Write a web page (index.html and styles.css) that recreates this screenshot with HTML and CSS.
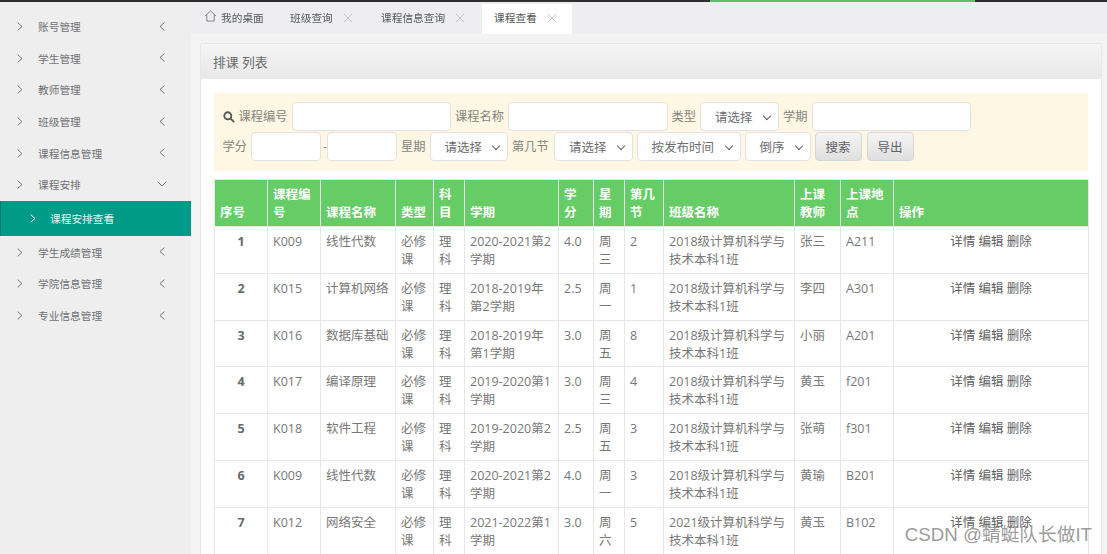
FILE: index.html
```html
<!DOCTYPE html>
<html lang="zh-CN">
<head>
<meta charset="utf-8">
<title>课程查看</title>
<link rel="stylesheet" href="styles.css">
</head>
<body>
<div class="page">
<div class="loadbar"><div class="loadbar-fill"></div></div>
<div class="app">
  <aside class="sidebar">
    <ul class="menu">
      <li class="menu-item"><svg class="chev" viewBox="0 0 6 9"><path d="M.7.7 5 4.500.7 8.300"/></svg><span class="menu-label">账号管理</span><svg class="chev-end" viewBox="0 0 6 9"><path d="M5.500.5 1 4.500l4.500 4"/></svg></li>
      <li class="menu-item"><svg class="chev" viewBox="0 0 6 9"><path d="M.7.7 5 4.500.7 8.300"/></svg><span class="menu-label">学生管理</span><svg class="chev-end" viewBox="0 0 6 9"><path d="M5.500.5 1 4.500l4.500 4"/></svg></li>
      <li class="menu-item"><svg class="chev" viewBox="0 0 6 9"><path d="M.7.7 5 4.500.7 8.300"/></svg><span class="menu-label">教师管理</span><svg class="chev-end" viewBox="0 0 6 9"><path d="M5.500.5 1 4.500l4.500 4"/></svg></li>
      <li class="menu-item"><svg class="chev" viewBox="0 0 6 9"><path d="M.7.7 5 4.500.7 8.300"/></svg><span class="menu-label">班级管理</span><svg class="chev-end" viewBox="0 0 6 9"><path d="M5.500.5 1 4.500l4.500 4"/></svg></li>
      <li class="menu-item"><svg class="chev" viewBox="0 0 6 9"><path d="M.7.7 5 4.500.7 8.300"/></svg><span class="menu-label">课程信息管理</span><svg class="chev-end" viewBox="0 0 6 9"><path d="M5.500.5 1 4.500l4.500 4"/></svg></li>
      <li class="menu-item"><svg class="chev" viewBox="0 0 6 9"><path d="M.7.7 5 4.500.7 8.300"/></svg><span class="menu-label">课程安排</span><svg class="chev-down" viewBox="0 0 10 6"><path d="M.7.7 5 5 9.300.7"/></svg></li>
      <li class="menu-sub"><svg class="chev" viewBox="0 0 6 9"><path d="M.7.7 5 4.500.7 8.300"/></svg><span class="menu-label">课程安排查看</span></li>
      <li class="menu-item"><svg class="chev" viewBox="0 0 6 9"><path d="M.7.7 5 4.500.7 8.300"/></svg><span class="menu-label">学生成绩管理</span><svg class="chev-end" viewBox="0 0 6 9"><path d="M5.500.5 1 4.500l4.500 4"/></svg></li>
      <li class="menu-item"><svg class="chev" viewBox="0 0 6 9"><path d="M.7.7 5 4.500.7 8.300"/></svg><span class="menu-label">学院信息管理</span><svg class="chev-end" viewBox="0 0 6 9"><path d="M5.500.5 1 4.500l4.500 4"/></svg></li>
      <li class="menu-item"><svg class="chev" viewBox="0 0 6 9"><path d="M.7.7 5 4.500.7 8.300"/></svg><span class="menu-label">专业信息管理</span><svg class="chev-end" viewBox="0 0 6 9"><path d="M5.500.5 1 4.500l4.500 4"/></svg></li>
    </ul>
  </aside>
  <main class="main">
    <nav class="tabs">
      <div class="tab tab-home"><svg class="home-icon" viewBox="0 0 14 13"><path d="M1 6.500 7 1l6 5.500M3 5.500V12h8V5.500"/></svg>我的桌面</div>
      <div class="tab tab-class">班级查询<svg class="tab-x" viewBox="0 0 10 10"><path d="m1 1 8 8M9 1l-8 8"/></svg></div>
      <div class="tab tab-info">课程信息查询<svg class="tab-x" viewBox="0 0 10 10"><path d="m1 1 8 8M9 1l-8 8"/></svg></div>
      <div class="tab tab-active">课程查看<svg class="tab-x" viewBox="0 0 10 10"><path d="m1 1 8 8M9 1l-8 8"/></svg></div>
    </nav>
    <section class="panel">
      <header class="panel-head">排课 列表</header>
      <div class="panel-body">
        <form class="filter">
          <div class="filter-row">
            <svg class="search-icon" viewBox="0 0 13 13"><circle cx="5.200" cy="5.200" r="3.800"/><path d="m8 8 4 4"/></svg>
            <label class="flabel">课程编号</label><input class="field w-long">
            <label class="flabel">课程名称</label><input class="field w-long">
            <label class="flabel">类型</label><div class="sel w-type">请选择</div>
            <label class="flabel">学期</label><input class="field w-long">
          </div>
          <div class="filter-row">
            <label class="flabel">学分</label><input class="field w-short"><span class="dash">-</span><input class="field w-short w-short-end">
            <label class="flabel">星期</label><div class="sel w-sel">请选择</div>
            <label class="flabel flabel-wide">第几节</label><div class="sel w-sel">请选择</div>
            <div class="sel w-time">按发布时间</div>
            <div class="sel w-order">倒序</div>
            <button type="button" class="btn">搜索</button>
            <button type="button" class="btn">导出</button>
          </div>
        </form>
        <table class="grid">
          <colgroup>
            <col class="c1"><col class="c2"><col class="c3"><col class="c4"><col class="c5"><col class="c6"><col class="c7"><col class="c8"><col class="c9"><col class="c10"><col class="c11"><col class="c12"><col class="c13">
          </colgroup>
          <thead>
            <tr><th>序号</th><th>课程编号</th><th>课程名称</th><th>类型</th><th>科目</th><th>学期</th><th>学分</th><th>星期</th><th>第几节</th><th>班级名称</th><th>上课教师</th><th>上课地点</th><th>操作</th></tr>
          </thead>
          <tbody>
            <tr><td class="num">1</td><td>K009</td><td>线性代数</td><td>必修课</td><td>理科</td><td>2020-2021第2学期</td><td>4.0</td><td>周三</td><td>2</td><td>2018级计算机科学与技术本科1班</td><td>张三</td><td>A211</td><td class="ops">详情 编辑 删除</td></tr>
            <tr><td class="num">2</td><td>K015</td><td>计算机网络</td><td>必修课</td><td>理科</td><td>2018-2019年第2学期</td><td>2.5</td><td>周一</td><td>1</td><td>2018级计算机科学与技术本科1班</td><td>李四</td><td>A301</td><td class="ops">详情 编辑 删除</td></tr>
            <tr><td class="num">3</td><td>K016</td><td>数据库基础</td><td>必修课</td><td>理科</td><td>2018-2019年第1学期</td><td>3.0</td><td>周五</td><td>8</td><td>2018级计算机科学与技术本科1班</td><td>小丽</td><td>A201</td><td class="ops">详情 编辑 删除</td></tr>
            <tr><td class="num">4</td><td>K017</td><td>编译原理</td><td>必修课</td><td>理科</td><td>2019-2020第1学期</td><td>3.0</td><td>周三</td><td>4</td><td>2018级计算机科学与技术本科1班</td><td>黄玉</td><td>f201</td><td class="ops">详情 编辑 删除</td></tr>
            <tr><td class="num">5</td><td>K018</td><td>软件工程</td><td>必修课</td><td>理科</td><td>2019-2020第2学期</td><td>2.5</td><td>周五</td><td>3</td><td>2018级计算机科学与技术本科1班</td><td>张萌</td><td>f301</td><td class="ops">详情 编辑 删除</td></tr>
            <tr><td class="num">6</td><td>K009</td><td>线性代数</td><td>必修课</td><td>理科</td><td>2020-2021第2学期</td><td>4.0</td><td>周一</td><td>3</td><td>2018级计算机科学与技术本科1班</td><td>黄瑜</td><td>B201</td><td class="ops">详情 编辑 删除</td></tr>
            <tr><td class="num">7</td><td>K012</td><td>网络安全</td><td>必修课</td><td>理科</td><td>2021-2022第1学期</td><td>3.0</td><td>周六</td><td>5</td><td>2021级计算机科学与技术本科1班</td><td>黄玉</td><td>B102</td><td class="ops">详情 编辑 删除</td></tr>
          </tbody>
        </table>
      </div>
    </section>
  </main>
</div>
<div class="watermark">CSDN @蜻蜓队长做IT</div>
</div>
</body>
</html>
```
FILE: styles.css
```css
* { box-sizing: border-box; }
html, body { margin: 0; height: 100%; overflow: hidden; }
body {
  width: 1107px;
  height: 554px;
  background: #f3f3f4;
  font-family: "Open Sans", "Noto Sans CJK SC", sans-serif;
  font-size: 12px;
  color: #676a6c;
}
.page { position: relative; height: 554px; overflow: hidden; filter: blur(0.35px); }
.loadbar { height: 2px; background: #2f2f2f; }
.loadbar-fill { width: 265px; height: 2px; margin-left: 710px; background: #62bb6e; }
.app { display: flex; height: 552px; }

.sidebar { width: 191px; flex: none; background: #eeeeef; padding-top: 8.700px; }
.menu { list-style: none; margin: 0; padding: 0; }
.menu-item { display: flex; align-items: center; height: 31.700px; padding-left: 17px; color: #6f7173; font-size: 10.700px; }
.menu-sub {
  display: flex; align-items: center; height: 35.500px; padding-left: 29px;
  background: #009a88; border-left: 1px solid #007a6c; color: #e6f6f3; font-size: 10.700px;
}
.chev { width: 6px; height: 9px; flex: none; margin-right: 15px; fill: none; stroke: #77797b; stroke-width: 1; }
.menu-sub .chev { stroke: #fff; margin-right: 14px; }
.menu-label { flex: 1; }
.chev-end { width: 6px; height: 9px; flex: none; margin-right: 26px; margin-bottom: 1px; fill: none; stroke: #77797b; stroke-width: 1; }
.chev-down { width: 10px; height: 6px; flex: none; margin-right: 24px; margin-bottom: 2px; fill: none; stroke: #77797b; stroke-width: 1; }

.main { flex: 1; min-width: 0; }
.tabs { display: flex; height: 32px; background: #eeeef0; padding-top: 2px; }
.tab { display: flex; align-items: center; color: #55585a; font-size: 10.700px; padding-bottom: 3px; }
.tab-home { width: 90px; padding-left: 13px; }
.tab-class { width: 90px; padding-left: 9px; }
.tab-info { width: 111px; padding-left: 10px; }
.tab-active { width: 90px; padding-left: 12px; background: #fff; }
.home-icon { width: 13px; height: 12px; margin-right: 4px; margin-bottom: 3px; fill: none; stroke: #77797b; stroke-width: 1; }
.tab-x { width: 10px; height: 10px; margin-left: 10px; fill: none; stroke: #c4c4c6; stroke-width: 1; }

.panel { margin: 9px 5px 0 9px; background: #fff; border: 1px solid #e7e7e7; border-bottom: 0; border-radius: 3px 3px 0 0; }
.panel-head {
  height: 35px; padding: 0 12px; display: flex; align-items: center;
  background: linear-gradient(#f5f5f5, #e8e8e8);
  color: #676a6c; font-size: 12.800px;
}
.panel-body { padding: 14px 13px 0; }
.filter { height: 77.500px; background: #fdf7e3; padding: 8.5px 8.600px 0; }
.filter-row { display: flex; align-items: center; height: 30px; }
.search-icon { width: 12px; height: 12px; flex: none; margin-right: 4px; fill: none; stroke: #555; stroke-width: 2; }
.flabel { color: #85857f; font-size: 12.250px; margin-right: 4px; margin-bottom: 2px; white-space: nowrap; }
.flabel-wide { margin-right: 5.250px; }
.field, .sel {
  flex: none; height: 29px; background: #fff; border: 1px solid #e2e2e2; border-radius: 4px; margin-right: 4px;
}
.w-long { width: 159.500px; }
.w-short { width: 70px; margin-right: 2px; }
.w-short-end { margin-right: 4px; }
.dash { color: #85857f; font-size: 12px; width: 4px; }
.sel {
  position: relative; display: flex; align-items: center; padding-left: 14px;
  color: #6c6e70; font-size: 12.500px;
}
.sel::after {
  content: ""; position: absolute; right: 8px; top: 10px; width: 5px; height: 5px;
  border-right: 1px solid #666; border-bottom: 1px solid #666; transform: rotate(45deg);
}
.w-type { width: 79px; }
.w-sel { width: 78.500px; }
.w-time { width: 104px; }
.w-order { width: 66px; }
.btn {
  flex: none; width: 47px; height: 29.500px; margin-right: 5px; padding: 0;
  border: 1px solid #d6d6d6; border-radius: 4px;
  background: linear-gradient(#f5f5f5, #dfdfdf);
  font: inherit; font-size: 12.500px; color: #5f6163;
}

.grid { margin-top: 8.500px; width: 874px; border-collapse: collapse; table-layout: fixed; background: #fff; }
.c1 { width: 53px; } .c2 { width: 53px; } .c3 { width: 75px; } .c4 { width: 38px; } .c5 { width: 31px; }
.c6 { width: 94px; } .c7 { width: 35px; } .c8 { width: 31px; } .c9 { width: 39px; } .c10 { width: 131px; }
.c11 { width: 46px; } .c12 { width: 53px; } .c13 { width: 195px; }
.grid th {
  height: 47px; padding: 6px 5px 4px; background: #66cc66; border: 1px solid #e7e7e7;
  color: #fff; font-weight: 700; font-size: 12.500px; line-height: 18px; text-align: left; vertical-align: bottom;
}
.grid td {
  height: 46.800px; padding: 6px 5px 3px; border: 1px solid #e7e7e7; vertical-align: top;
  font-size: 12.500px; line-height: 18px; color: #777;
}
.grid .num { text-align: center; font-weight: 700; color: #676a6c; }
.grid .ops { text-align: center; color: #5f6163; padding-left: 0; padding-right: 0; }

.watermark {
  position: absolute; right: 15px; top: 519px;
  font-family: "Liberation Sans", "Noto Sans CJK SC", sans-serif;
  font-size: 18.700px; color: rgba(110, 110, 110, 0.7); white-space: nowrap;
}
```
